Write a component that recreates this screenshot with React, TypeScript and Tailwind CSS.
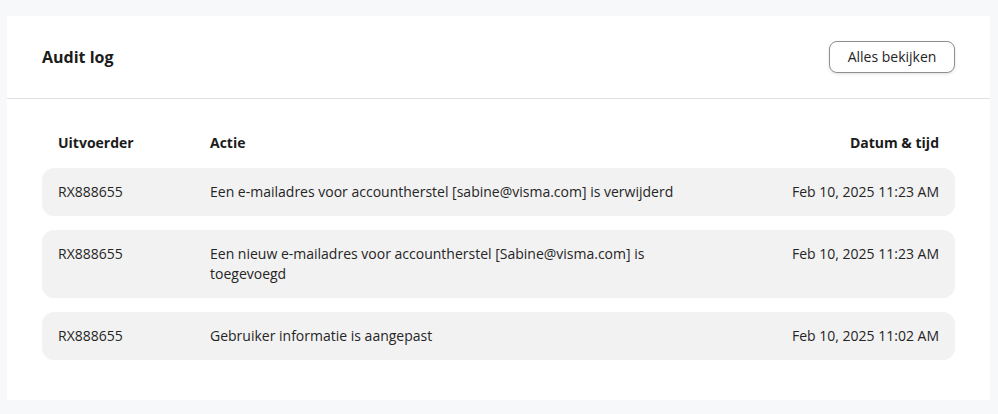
import React from 'react';

interface AuditEntry {
  id: string;
  user: string;
  action: string;
  date: string;
}

const entries: AuditEntry[] = [
  {
    id: '1',
    user: 'RX888655',
    action: 'Een e-mailadres voor accountherstel [sabine@visma.com] is verwijderd',
    date: 'Feb 10, 2025 11:23 AM',
  },
  {
    id: '2',
    user: 'RX888655',
    action: 'Een nieuw e-mailadres voor accountherstel [Sabine@visma.com] is toegevoegd',
    date: 'Feb 10, 2025 11:23 AM',
  },
  {
    id: '3',
    user: 'RX888655',
    action: 'Gebruiker informatie is aangepast',
    date: 'Feb 10, 2025 11:02 AM',
  },
];

const App: React.FC = () => {
  return (
    <div
      className="min-h-screen bg-[#f7f8fa] pt-4 pl-[7px] pr-[8px] text-[#252525]"
      style={{ fontFamily: '"Open Sans", "Noto Sans", sans-serif' }}
    >
      <div className="bg-white">
        {/* Header */}
        <div className="flex h-[83px] items-center justify-between border-b border-[#e1e1e1] pl-[35px] pr-[35px]">
          <h2 className="text-base font-bold text-[#1b1b1b]">Audit log</h2>
          <button className="h-8 w-[126px] rounded-lg border border-[#8f8f8f] bg-white text-sm text-[#252525] shadow-[0_1px_3px_rgba(0,0,0,0.12)]">
            Alles bekijken
          </button>
        </div>

        {/* Table */}
        <div className="px-[35px] pt-[34px] pb-[40px]">
          <div className="mb-[15px] grid grid-cols-[152px_480px_1fr] px-4 text-sm leading-5 font-bold text-[#1b1b1b]">
            <span>Uitvoerder</span>
            <span>Actie</span>
            <span className="text-right">Datum &amp; tijd</span>
          </div>
          <div className="flex flex-col gap-[14px]">
            {entries.map(entry => (
              <div
                key={entry.id}
                className="grid grid-cols-[152px_480px_1fr] rounded-xl bg-[#f2f2f2] px-4 py-[14px] text-sm leading-5"
              >
                <span>{entry.user}</span>
                <span>{entry.action}</span>
                <span className="text-right">{entry.date}</span>
              </div>
            ))}
          </div>
        </div>
      </div>
    </div>
  );
};

export default App;
